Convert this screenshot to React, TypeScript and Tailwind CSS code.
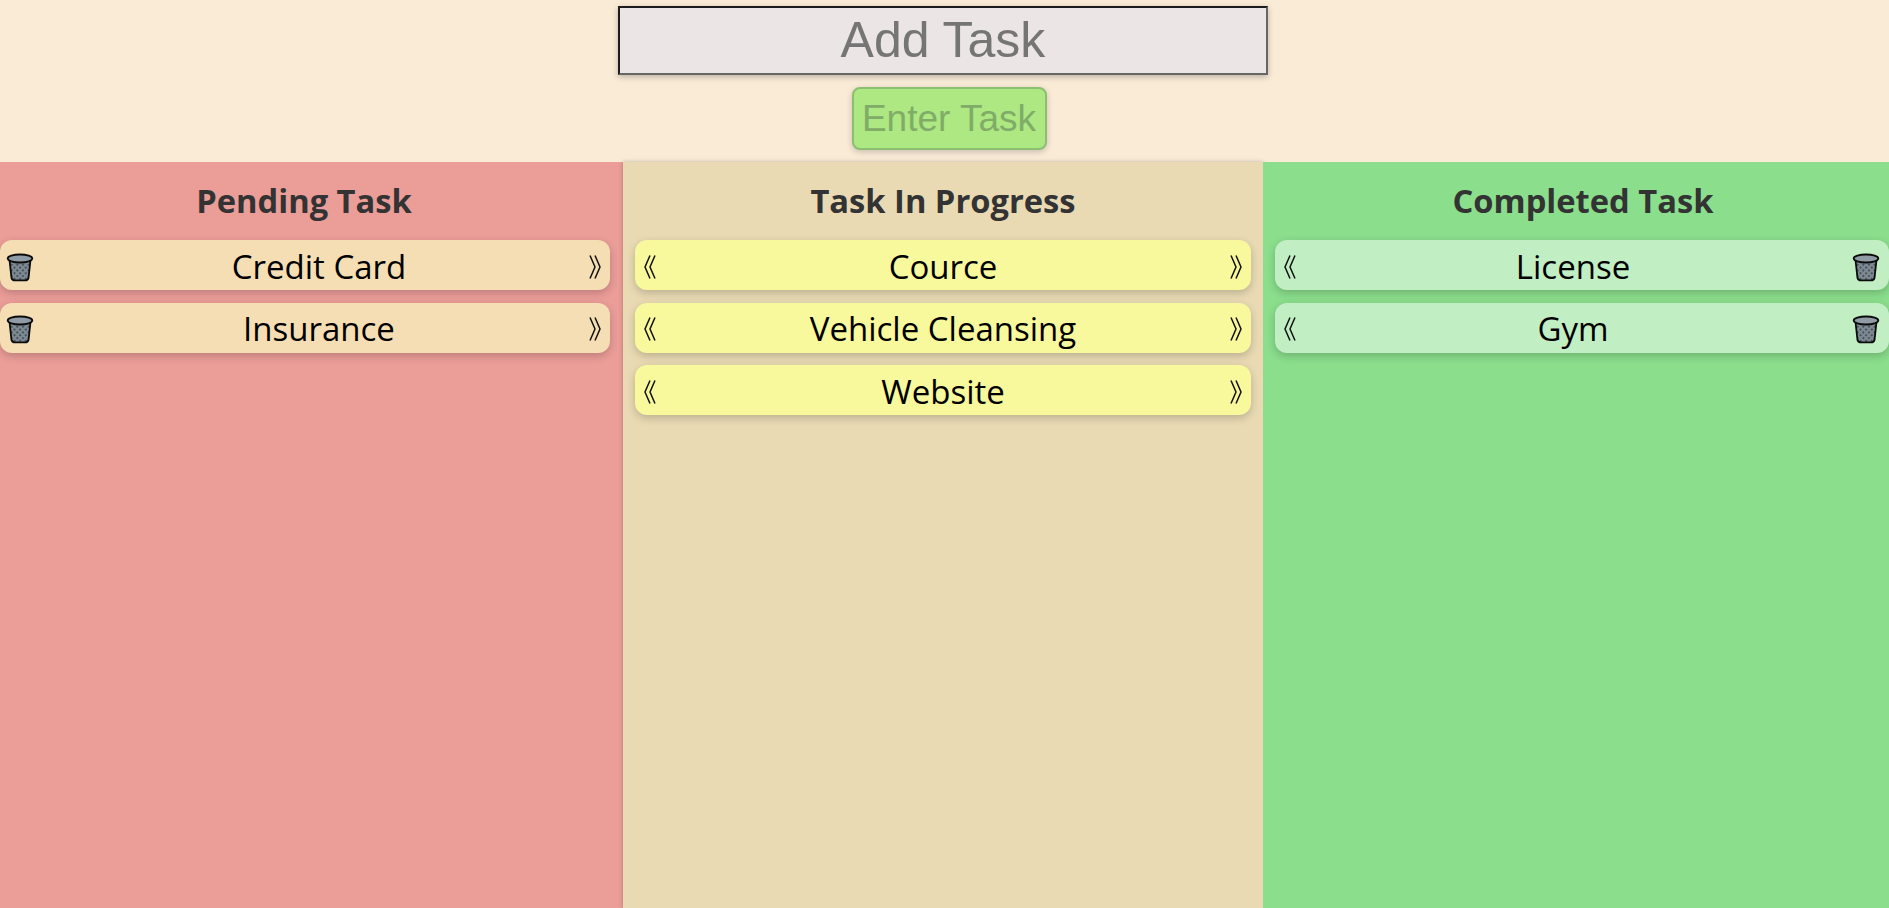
const sans = 'font-["Open_Sans","Noto_Sans",sans-serif]';
const title = `${sans} flex h-[78px] items-center justify-center text-[32.7px] font-bold text-[#333]`;

function Trash() {
  return (
    <svg width="28" height="30" viewBox="0 0 28 30" className="shrink-0">
      <defs>
        <pattern id="mesh" width="4" height="4" patternUnits="userSpaceOnUse" patternTransform="rotate(45)">
          <rect width="4" height="4" fill="#7d8a93" />
          <rect width="2" height="2" fill="#4a545b" />
        </pattern>
      </defs>
      <path d="M3.5 8 L5.5 26 Q6 28.4 9 28.4 H19 Q22 28.4 22.5 26 L24.5 8 Z" fill="url(#mesh)" stroke="#0b0b0b" strokeWidth="1.8" />
      <ellipse cx="14" cy="6.5" rx="12.3" ry="4" fill="#8f9ca5" stroke="#0b0b0b" strokeWidth="1.8" />
    </svg>
  );
}

function Chevrons({ left }: { left?: boolean }) {
  return (
    <svg width="12" height="24" viewBox="0 0 12 24" fill="none" stroke="#111" strokeWidth="1.5" className="shrink-0">
      {left ? (
        <>
          <path d="M6 0.5 L1 12 L6 23.5" />
          <path d="M11 0.5 L6 12 L11 23.5" />
        </>
      ) : (
        <>
          <path d="M1 0.5 L6 12 L1 23.5" />
          <path d="M6 0.5 L11 12 L6 23.5" />
        </>
      )}
    </svg>
  );
}

function Card({
  text,
  color,
  left,
  right,
  slots,
}: {
  text: string;
  color: string;
  left: 'trash' | 'back';
  right: 'trash' | 'next';
  slots: [string, string];
}) {
  return (
    <div className={`${color} flex h-[50px] items-center rounded-xl shadow-[0_3px_8px_rgba(0,0,0,0.2)]`}>
      <div className={`${slots[0]} flex shrink-0 justify-start pt-[3px] ${left === 'trash' ? 'pl-[6px]' : 'pl-[9px]'}`}>
        {left === 'trash' ? <Trash /> : <Chevrons left />}
      </div>
      <span className={`${sans} flex-1 pt-[2px] text-center text-[33px] leading-none text-black`}>{text}</span>
      <div className={`${slots[1]} flex shrink-0 justify-end pt-[3px] pr-[9px]`}>
        {right === 'trash' ? <Trash /> : <Chevrons />}
      </div>
    </div>
  );
}

const pending = ['Credit Card', 'Insurance'];
const progress = ['Cource', 'Vehicle Cleansing', 'Website'];
const completed = ['License', 'Gym'];

export default function App() {
  return (
    <div className="flex h-screen flex-col overflow-hidden bg-[#faebd7]">
      <div className="flex h-[162px] shrink-0 flex-col items-center">
        <input
          placeholder="Add Task"
          className="mt-[6px] mr-[3px] h-[69px] w-[650px] border-2 border-t-[#1c1c1c] border-r-[#666] border-b-[#666] border-l-[#1c1c1c] bg-[#ece5e5] text-center font-['Liberation_Sans',sans-serif] text-[50px] shadow-[0_2px_6px_rgba(0,0,0,0.25)] outline-none placeholder:text-[#757575]"
        />
        <button className="mt-3 ml-[9px] h-[63px] w-[195px] rounded-lg border-2 border-[#8cc070] bg-[#ade882] font-['Liberation_Sans',sans-serif] text-[37px] text-[#80ac68] shadow-[0_2px_6px_rgba(0,0,0,0.2)]">
          Enter Task
        </button>
      </div>
      <div className="flex min-h-0 flex-1">
        <section className="w-[623px] bg-[#eb9d98] pr-[13px]">
          <h2 className={`${title} pr-[2px]`}>Pending Task</h2>
          <div className="flex flex-col gap-[12.5px]">
            {pending.map((t) => (
              <Card key={t} text={t} color="bg-[#f5deb3]" left="trash" right="next" slots={['w-[68px]', 'w-[40px]']} />
            ))}
          </div>
        </section>
        <section className="w-[640px] bg-[#e9dab3] px-3 shadow-[0_0_4px_rgba(0,0,0,0.25)]">
          <h2 className={title}>Task In Progress</h2>
          <div className="flex flex-col gap-[12.5px]">
            {progress.map((t) => (
              <Card key={t} text={t} color="bg-[#f8f89d]" left="back" right="next" slots={['w-[40px]', 'w-[40px]']} />
            ))}
          </div>
        </section>
        <section className="flex-1 bg-[#8ade8c] pl-3">
          <h2 className={`${title} pl-[2px]`}>Completed Task</h2>
          <div className="flex flex-col gap-[12.5px]">
            {completed.map((t) => (
              <Card key={t} text={t} color="bg-[#c1efc3]" left="back" right="trash" slots={['w-[40px]', 'w-[58px]']} />
            ))}
          </div>
        </section>
      </div>
    </div>
  );
}
